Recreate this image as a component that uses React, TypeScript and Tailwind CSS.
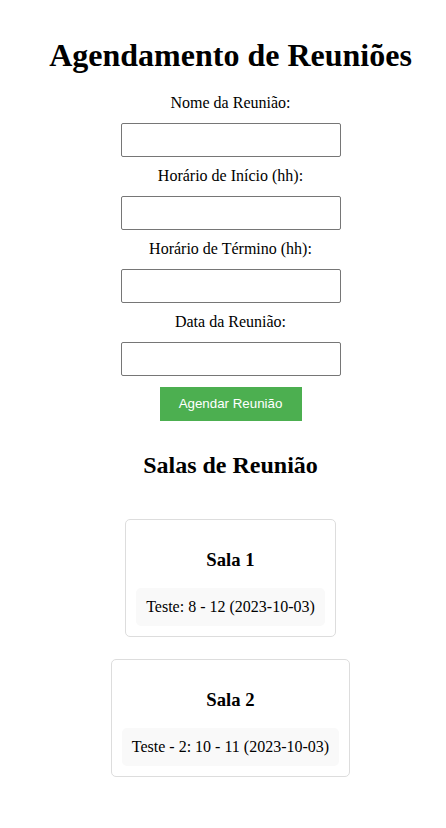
const fields = [
  'Nome da Reunião:',
  'Horário de Início (hh):',
  'Horário de Término (hh):',
  'Data da Reunião:',
];

const salas = [
  { nome: 'Sala 1', reunioes: ['Teste: 8 - 12 (2023-10-03)'] },
  { nome: 'Sala 2', reunioes: ['Teste - 2: 10 - 11 (2023-10-03)'] },
];

const App = () => {
  return (
    <div className="min-h-[828px] bg-white pl-[23px] pr-[8px] pt-[37px] pb-10 text-black font-['Liberation_Serif','Times_New_Roman',serif]">
      {/* Formulário */}
      <h1 className="text-center text-[32px] leading-[37px] font-bold">Agendamento de Reuniões</h1>

      <form className="flex flex-col items-center mt-[20px]" onSubmit={(e) => e.preventDefault()}>
        {fields.map((label, i) => (
          <div key={label} className={`flex flex-col items-center ${i > 0 ? 'mt-[10px]' : ''}`}>
            <label className="text-[16px] leading-[18px] mb-[11px]">{label}</label>
            <input
              type="text"
              className="w-[220px] h-[34px] border border-[#767676] rounded-[2px] bg-white outline-none px-1"
            />
          </div>
        ))}
        <button
          type="submit"
          className="mt-[11px] w-[142px] h-[34px] bg-[#4caf50] text-white text-[13.33px] font-['Liberation_Sans',Arial,sans-serif]"
        >
          Agendar Reunião
        </button>
      </form>

      {/* Salas */}
      <h2 className="mt-[30px] text-center text-[24px] leading-[28px] font-bold">Salas de Reunião</h2>

      <div className="mt-[40px] flex flex-col items-center gap-[22px]">
        {salas.map((sala) => (
          <div key={sala.nome} className="border border-[#dddddd] rounded-[5px] p-[10px] flex flex-col items-center">
            <h3 className="mt-[19px] mb-[18px] text-[18.72px] leading-[21px] font-bold">{sala.nome}</h3>
            {sala.reunioes.map((r) => (
              <div key={r} className="bg-[#f9f9f9] rounded-[5px] p-[10px] text-[16px] leading-[18px]">
                {r}
              </div>
            ))}
          </div>
        ))}
      </div>
    </div>
  );
};

export default App;
